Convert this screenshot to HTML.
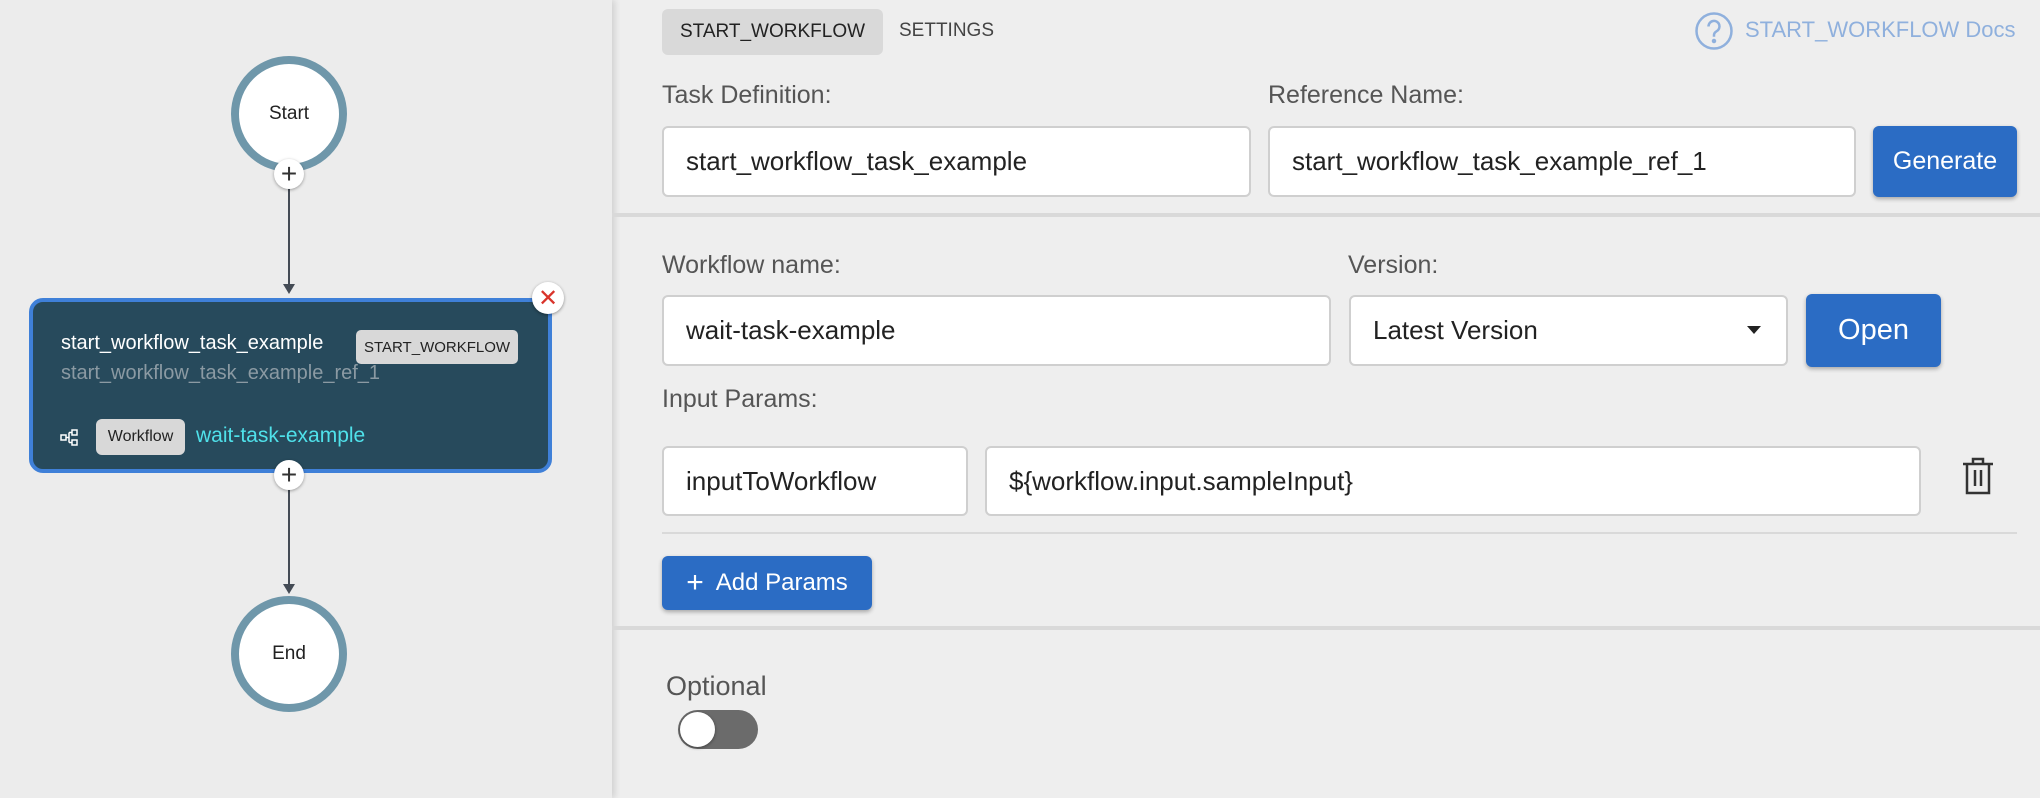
<!DOCTYPE html>
<html><head><meta charset="utf-8"><style>
*{box-sizing:border-box;margin:0;padding:0}
body{width:2040px;height:798px;overflow:hidden;background:#eeeeee;font-family:"Liberation Sans",sans-serif;position:relative}
.abs{position:absolute}
#left{left:0;top:0;width:612px;height:798px;background:#ececec;box-shadow:3px 0 6px rgba(0,0,0,.12)}
.circ{position:absolute;width:116px;height:116px;border-radius:50%;border:8px solid #6f97aa;background:#fff;display:flex;align-items:center;justify-content:center;font-size:19px;color:#222}
.plus{position:absolute;width:30px;height:30px;border-radius:50%;background:#fff;box-shadow:0 1px 3px rgba(0,0,0,.35);display:flex;align-items:center;justify-content:center;font-size:28px;color:#333;line-height:1}
.vline{position:absolute;width:2px;background:#444b55}
.lbl{position:absolute;font-size:25px;color:#555}
.inp{position:absolute;background:#fff;border:2px solid #cfcfcf;border-radius:6px;font-size:26px;color:#222;display:flex;align-items:center;padding-left:22px}
.btn{position:absolute;background:#2b6cc4;color:#fff;border-radius:6px;box-shadow:0 2px 4px rgba(0,0,0,.3);display:flex;align-items:center;justify-content:center}
.hr{position:absolute;background:#d9d9d9}
</style></head><body>
<div id="left" class="abs"></div>
<div class="circ" style="left:231px;top:56px">Start</div>
<div class="vline" style="left:288px;top:188px;height:100px"></div>
<div class="abs" style="left:283px;top:284px;width:0;height:0;border-left:6px solid transparent;border-right:6px solid transparent;border-top:10px solid #444b55"></div>
<div class="plus" style="left:274px;top:159px">+</div>
<div class="abs" style="left:29px;top:298px;width:523px;height:175px;background:#274a5c;border:4px solid #3f80d8;border-radius:14px"></div>
<div class="abs" style="left:61px;top:332px;font-size:20px;color:#fff">start_workflow_task_example</div>
<div class="abs" style="left:61px;top:362px;font-size:20px;color:#8b9aa3">start_workflow_task_example_ref_1</div>
<div class="abs" style="left:356px;top:330px;width:162px;height:34px;background:#d8d8d8;border-radius:5px;font-size:15px;color:#222;display:flex;align-items:center;justify-content:center">START_WORKFLOW</div>
<svg class="abs" style="left:60px;top:428px" width="20" height="20" viewBox="0 0 20 20" fill="none" stroke="#fff" stroke-width="1.5"><rect x="1" y="7" width="5" height="5"/><rect x="12" y="2" width="5" height="5"/><rect x="12" y="12" width="5" height="5"/><path d="M6 9.5h3M9 4.5v10M9 4.5h3M9 14.5h3"/></svg>
<div class="abs" style="left:96px;top:419px;width:89px;height:36px;background:#d8d8d8;border-radius:6px;font-size:16px;color:#222;display:flex;align-items:center;justify-content:center">Workflow</div>
<div class="abs" style="left:196px;top:424px;font-size:21px;color:#4fe1ea">wait-task-example</div>
<div class="abs" style="left:532px;top:282px;width:32px;height:32px;border-radius:50%;background:#fff;box-shadow:0 1px 3px rgba(0,0,0,.4);color:#d9342b;font-size:24px;display:flex;align-items:center;justify-content:center">✕</div>
<div class="vline" style="left:288px;top:488px;height:100px"></div>
<div class="abs" style="left:283px;top:584px;width:0;height:0;border-left:6px solid transparent;border-right:6px solid transparent;border-top:10px solid #444b55"></div>
<div class="plus" style="left:274px;top:460px">+</div>
<div class="circ" style="left:231px;top:596px">End</div>

<div class="abs" style="left:662px;top:9px;width:221px;height:46px;background:#d9d9d9;border-radius:6px;font-size:19px;color:#222;display:flex;align-items:center;justify-content:center">START_WORKFLOW</div>
<div class="abs" style="left:899px;top:20px;font-size:19px;color:#444">SETTINGS</div>
<svg class="abs" style="left:1694px;top:11px" width="40" height="40" viewBox="0 0 40 40" fill="none" stroke="#8fb0dd" stroke-width="2.5"><circle cx="20" cy="20" r="17.5"/><path d="M14.5 15.5a5.5 5.5 0 1 1 8 4.8c-1.8 1-2.5 2-2.5 4v1.5"/><circle cx="20" cy="30" r="1" fill="#8fb0dd"/></svg>
<div class="abs" style="left:1745px;top:17px;font-size:22px;color:#8fb0dd">START_WORKFLOW Docs</div>

<div class="lbl" style="left:662px;top:81px">Task Definition:</div>
<div class="lbl" style="left:1268px;top:81px">Reference Name:</div>
<div class="inp" style="left:662px;top:126px;width:589px;height:71px">start_workflow_task_example</div>
<div class="inp" style="left:1268px;top:126px;width:588px;height:71px">start_workflow_task_example_ref_1</div>
<div class="btn" style="left:1873px;top:126px;width:144px;height:71px;font-size:25px">Generate</div>
<div class="hr" style="left:612px;top:213px;width:1428px;height:4px"></div>

<div class="lbl" style="left:662px;top:251px">Workflow name:</div>
<div class="lbl" style="left:1348px;top:251px">Version:</div>
<div class="inp" style="left:662px;top:295px;width:669px;height:71px">wait-task-example</div>
<div class="inp" style="left:1349px;top:295px;width:439px;height:71px">Latest Version</div>
<div class="abs" style="left:1747px;top:326px;width:0;height:0;border-left:7px solid transparent;border-right:7px solid transparent;border-top:8px solid #222"></div>
<div class="btn" style="left:1806px;top:294px;width:135px;height:73px;font-size:29px">Open</div>

<div class="lbl" style="left:662px;top:385px">Input Params:</div>
<div class="inp" style="left:662px;top:446px;width:306px;height:70px">inputToWorkflow</div>
<div class="inp" style="left:985px;top:446px;width:936px;height:70px">${workflow.input.sampleInput}</div>
<svg class="abs" style="left:1961px;top:456px" width="34" height="40" viewBox="0 0 34 40" fill="none" stroke="#333" stroke-width="2.5"><path d="M2 8h30M12 8V3h10v5M6 8v29h22V8M14 14v16M20 14v16"/></svg>
<div class="hr" style="left:662px;top:532px;width:1355px;height:2px"></div>
<div class="btn" style="left:662px;top:556px;width:210px;height:54px;font-size:24px"><span style="font-size:30px;font-weight:300;margin-right:12px">+</span>Add Params</div>
<div class="hr" style="left:612px;top:626px;width:1428px;height:4px"></div>

<div class="lbl" style="left:666px;top:671px;font-size:27px">Optional</div>
<div class="abs" style="left:678px;top:710px;width:80px;height:39px;border-radius:20px;background:#6b6b6b"></div>
<div class="abs" style="left:680px;top:712px;width:35px;height:35px;border-radius:50%;background:#fff;box-shadow:0 1px 3px rgba(0,0,0,.4)"></div>
</body></html>
